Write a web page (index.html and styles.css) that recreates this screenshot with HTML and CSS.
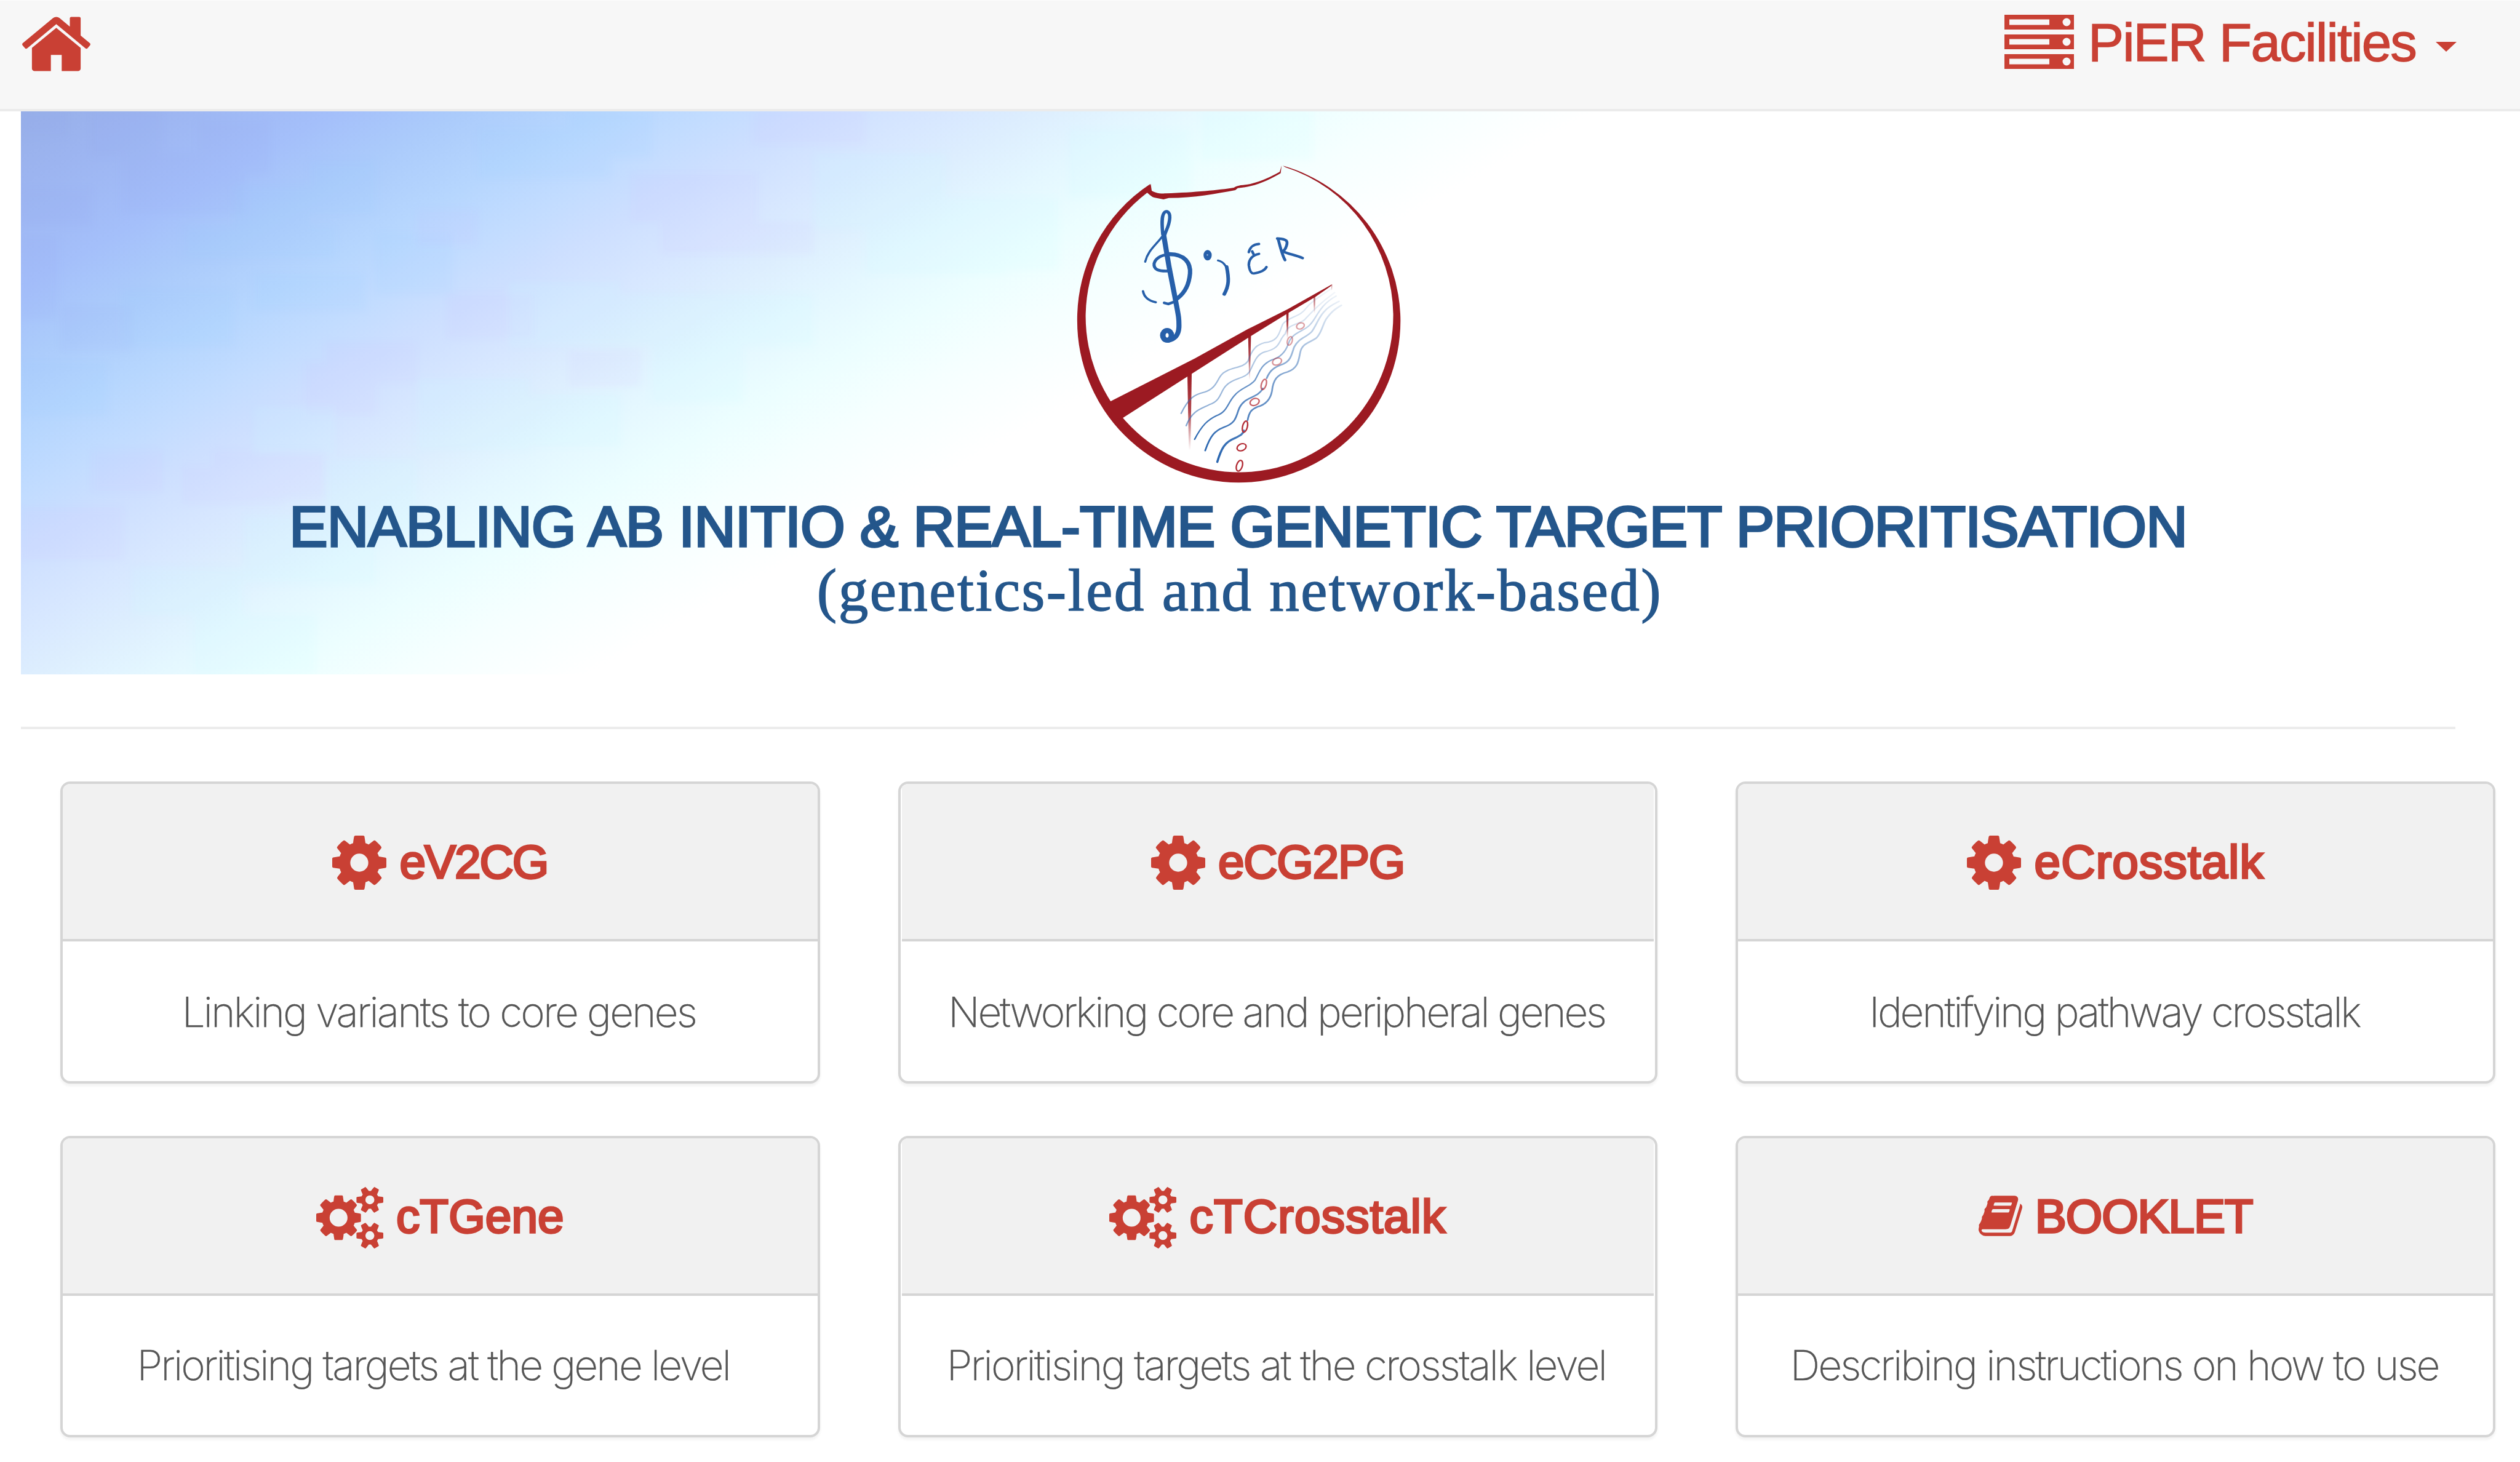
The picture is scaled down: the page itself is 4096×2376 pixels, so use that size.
FILE: index.html
```html
<!DOCTYPE html>
<html lang="en">
<head>
<meta charset="utf-8">
<title>PiER</title>
<link rel="stylesheet" href="styles.css">
</head>
<body>
<svg class="sprite" aria-hidden="true">
  <symbol id="cog" viewBox="128 128 1536 1536"><path d="M1152 896q0-106-75-181t-181-75-181 75-75 181 75 181 181 75 181-75 75-181zm512-109v222q0 12-8 23t-20 13l-185 28q-19 54-39 91 35 50 107 138 10 12 10 25t-9 23q-27 37-99 108t-94 71q-12 0-26-9l-138-108q-44 23-91 38-16 136-29 186-7 28-36 28h-222q-14 0-24.5-8.5t-11.5-21.5l-28-184q-49-16-90-37l-141 107q-10 9-25 9-14 0-25-11-126-114-165-168-7-10-7-23 0-12 8-23 15-21 51-66.500t54-70.500q-27-50-41-99l-183-27q-13-2-21-12.500t-8-23.500v-222q0-12 8-23t19-13l186-28q14-46 39-92-40-57-107-138-10-12-10-24 0-10 9-23 26-36 98.500-107.500t94.500-71.500q13 0 26 10l138 107q44-23 91-38 16-136 29-186 7-28 36-28h222q14 0 24.500 8.500t11.500 21.500l28 184q49 16 90 37l142-107q9-9 24-9 13 0 25 10 129 119 165 170 7 8 7 22 0 12-8 23-15 21-51 66.500t-54 70.500q26 50 41 98l183 28q13 2 21 12.500t8 23.500z"/></symbol>
  <symbol id="cogs" viewBox="-64 16 1920 1760"><path d="M832 896q0-106-75-181t-181-75-181 75-75 181 75 181 181 75 181-75 75-181zm768 512q0-52-38-90t-90-38-90 38-38 90q0 53 37.500 90.500t90.500 37.500 90.500-37.500 37.500-90.500zm0-1024q0-52-38-90t-90-38-90 38-38 90q0 53 37.500 90.500t90.500 37.500 90.500-37.500 37.500-90.500zm-384 421v185q0 10-7 19.500t-16 10.500l-155 24q-11 35-32 76 34 48 90 115 7 11 7 20 0 12-7 19-23 30-82.500 89.500t-78.500 59.500q-11 0-21-7l-115-90q-37 19-77 31-11 108-23 155-7 24-30 24h-186q-11 0-20-7.500t-10-17.500l-23-153q-34-10-75-31l-118 89q-7 7-20 7-11 0-21-8-144-133-144-160 0-9 7-19 10-14 41-53t47-61q-23-44-35-82l-152-24q-10-1-17-9.500t-7-19.500v-185q0-10 7-19.500t16-10.500l155-24q11-35 32-76-34-48-90-115-7-11-7-20 0-12 7-20 22-30 82-89t79-59q11 0 21 7l115 90q34-18 77-32 11-108 23-154 7-24 30-24h186q11 0 20 7.500t10 17.500l23 153q34 10 75 31l118-89q8-7 20-7 11 0 21 8 144 133 144 160 0 8-7 19-12 16-42 54t-45 60q23 48 34 82l152 23q10 2 17 10.500t7 19.500zm640 533v140q0 16-149 31-12 27-30 52 51 113 51 138 0 4-4 7-122 71-124 71-8 0-46-47t-52-68q-20 2-30 2t-30-2q-14 21-52 68t-46 47q-2 0-124-71-4-3-4-7 0-25 51-138-18-25-30-52-149-15-149-31v-140q0-16 149-31 13-29 30-52-51-113-51-138 0-4 4-7 4-2 35-20t59-34 30-16q8 0 46 46.500t52 67.500q20-2 30-2t30 2q51-71 92-112l6-2q4 0 124 70 4 3 4 7 0 25-51 138 17 23 30 52 149 15 149 31zm0-1024v140q0 16-149 31-12 27-30 52 51 113 51 138 0 4-4 7-122 71-124 71-8 0-46-47t-52-68q-20 2-30 2t-30-2q-14 21-52 68t-46 47q-2 0-124-71-4-3-4-7 0-25 51-138-18-25-30-52-149-15-149-31v-140q0-16 149-31 13-29 30-52-51-113-51-138 0-4 4-7 4-2 35-20t59-34 30-16q8 0 46 46.500t52 67.500q20-2 30-2t30 2q51-71 92-112l6-2q4 0 124 70 4 3 4 7 0 25-51 138 17 23 30 52 149 15 149 31z"/></symbol>
  <symbol id="book" viewBox="64 128 1664 1536"><path d="M1703 478q40 57 18 129l-275 906q-19 64-76.500 107.500t-122.500 43.500h-923q-77 0-148.500-53.500t-99.500-131.500q-24-67-2-127 0-4 3-27t4-37q1-8-3-21.500t-3-19.500q2-11 8-21t16.500-23.500 16.500-23.500q23-38 45-91.500t30-91.500q3-10 .5-30t-.5-28q3-11 17-28t17-23q21-36 42-92t25-90q1-9-2.500-32t.5-28q4-13 22-30.500t22-22.500q19-26 42.500-84.500t27.500-96.500q1-8-3-25.500t-2-26.500q2-8 9-18t18-23 17-21q8-12 16.500-30.500t15-35 16-36 19.500-32 26.500-23.500 36-11.500 47.500 5.500l-1 3q38-9 51-9h761q74 0 114 56t18 130l-274 906q-36 119-71.500 153.500t-128.500 34.500h-869q-27 0-38 15-11 16-1 43 24 70 144 70h923q29 0 56-15.500t35-41.500l300-987q7-22 5-57 38 15 59 43zm-1064 2q-4 13 2 22.500t20 9.500h608q13 0 25.500-9.500t16.500-22.500l21-64q4-13-2-22.500t-20-9.500h-608q-13 0-25.500 9.500t-16.500 22.500zm-83 256q-4 13 2 22.500t20 9.500h608q13 0 25.500-9.500t16.500-22.500l21-64q4-13-2-22.500t-20-9.500h-608q-13 0-25.500 9.500t-16.500 22.500z"/></symbol>
</svg>

<nav class="navbar">
  <a class="home" aria-label="Home">
    <svg class="home-icon" viewBox="89 253 1614 1283"><path d="M1472 992v480q0 26-19 45t-45 19h-384v-384h-256v384h-384q-26 0-45-19t-19-45v-480q0-1 .5-3t.5-3l575-474 575 474q1 2 1 6zm223-69l-62 74q-8 9-21 11h-3q-13 0-21-7l-692-577-692 577q-12 8-24 7-13-2-21-11l-62-74q-8-10-7-23.500t11-21.500l719-599q32-26 76-26t76 26l244 204v-195q0-14 9-23t23-9h192q14 0 23 9t9 23v408l219 182q10 8 11 21.500t-7 23.500z"/></svg>
  </a>
  <a class="facilities">
    <svg class="server-icon" viewBox="0 0 113 88"><path fill-rule="evenodd" d="M0 0h113v24H0zM8 7.500v9h65v-9zM94.500 12a6.500 6.500 0 1 0 13 0a6.500 6.500 0 1 0-13 0zM0 32h113v24H0zM8 39.500v9h65v-9zM94.500 44a6.500 6.500 0 1 0 13 0a6.500 6.500 0 1 0-13 0zM0 64h113v24H0zM8 71.500v9h65v-9zM94.500 76a6.500 6.500 0 1 0 13 0a6.500 6.500 0 1 0-13 0z"/></svg>
    <span class="facilities-label">PiER Facilities</span>
    <span class="caret"></span>
  </a>
</nav>

<main>
  <header class="banner">
    <svg class="mosaic" viewBox="21 16 2391.6 1400" preserveAspectRatio="none" aria-hidden="true">
      <g fill="#8f9cf0" opacity=".07">
        <path d="M21 16h45v60h-45zM90 16h70v110h-70zM120 120h122v150h-122zM21 330h36v200h-36zM21 210h70v90h-70zM195 40h70v130h-70zM60 500h70v110h-70z"/>
      </g>
      <g fill="#8ccdfb" opacity=".08">
        <path d="M305 140h65v130h-65zM180 300h150v80h-150zM370 320h75v150h-75zM120 460h110v140h-110zM470 60h130v120h-130zM230 200h75v110h-75zM21 640h85v130h-85zM250 420h110v90h-110zM560 20h80v110h-80z"/>
      </g>
      <g fill="#c9b8ff" opacity=".08">
        <path d="M620 170h125v120h-125zM740 16h110v80h-110zM650 290h150v80h-150zM410 260h60v90h-60zM320 590h90v100h-90zM300 640h70v130h-70zM210 860h110v120h-110zM180 900h100v90h-100zM440 470h85v110h-85zM21 1000h100v130h-100zM560 610h70v90h-70zM90 860h70v100h-70z"/>
      </g>
      <g fill="#c8fbff" opacity=".12">
        <path d="M500 440h110v160h-110zM800 120h130v190h-130zM850 280h140v140h-140zM610 470h190v130h-190zM410 680h110v180h-110zM240 1020h130v170h-130zM130 1150h110v120h-110zM1050 60h120v170h-120zM930 230h110v180h-110zM320 880h90v180h-90zM190 1270h120v146h-120zM1180 16h110v120h-110zM640 600h90v140h-90zM520 720h90v130h-90zM250 750h80v120h-80z"/>
      </g>
    </svg>
    <svg class="logo" viewBox="0 0 1568 1568" preserveAspectRatio="none" aria-label="PiER">
      <defs>
        <linearGradient id="water" gradientUnits="userSpaceOnUse" x1="680" y1="1400" x2="1200" y2="700"><stop offset="0" stop-color="#2a66b0"/><stop offset=".5" stop-color="#2a66b0" stop-opacity=".62"/><stop offset="1" stop-color="#2a66b0" stop-opacity=".1"/></linearGradient>
        <linearGradient id="water-far" gradientUnits="userSpaceOnUse" x1="560" y1="1300" x2="1180" y2="640"><stop offset="0" stop-color="#2a66b0" stop-opacity=".6"/><stop offset=".5" stop-color="#2a66b0" stop-opacity=".35"/><stop offset="1" stop-color="#2a66b0" stop-opacity=".05"/></linearGradient>
        <linearGradient id="pier" x1="0" y1="0" x2="0" y2="1"><stop offset="0" stop-color="#9c1a22"/><stop offset=".5" stop-color="#9c1a22" stop-opacity=".8"/><stop offset="1" stop-color="#9c1a22" stop-opacity="0"/></linearGradient>
      </defs>
      <g fill="#9c1a22">
        <path d="M415 168A670 737 0 0 0 112 790A670 737 0 0 0 782 1527A671 737 0 0 0 1453 790A671 737 0 0 0 965 85L975 92A640 711 0 0 1 1423 765A638 715 0 0 1 787 1480A640 711 0 0 1 147 770A640 711 0 0 1 402 208Z"/>
        <path d="M398 195L402 208C412 215 420 228 434 230L470 238L492 232C600 231 690 212 768 196L778 187C860 178 905 150 956 119L960 84L952 113C915 135 880 155 830 168C800 174 778 172 762 185C700 196 600 206 480 211C450 213 430 206 421 198L417 168Z"/>
        <path d="M240 1163L600 962L820 828L985 738L1168 625L1165 632L1100 682L985 757L830 862L590 1030L298 1235L262 1240Z"/>
      </g>
      <g fill="url(#pier)">
        <path d="M569 1030h18l-5 350h-7z"/><path d="M821 855h12l-4 204h-4z"/><path d="M979 748h10l-3 124h-4z"/><path d="M1092 678h8l-2 78h-4z" opacity=".6"/><path d="M1166 625h4l-1 28h-2z" opacity=".5"/>
      </g>
      <g fill="none" stroke="url(#water)" stroke-linecap="round">
        <path stroke-width="9" d="M693 1433C710 1370 725 1342 765 1325C790 1312 800 1306 804 1290"/>
        <path stroke-width="7" d="M819 1243C825 1205 835 1194 860 1182C900 1170 915 1140 920 1110C925 1060 940 1035 985 1023C1030 1005 1030 970 1037 935C1045 890 1080 890 1105 868C1130 840 1130 800 1150 775C1170 745 1185 735 1208 720"/>
        <path stroke-width="7" d="M643 1381C665 1310 685 1290 720 1275C765 1258 770 1235 780 1200C795 1150 830 1145 860 1125C875 1112 880 1104 882 1098M898 1052C915 1005 940 1000 970 985C1000 970 1003 935 1012 910C1030 870 1060 868 1085 840C1105 810 1115 770 1140 745C1155 725 1175 715 1198 702"/>
        <path stroke-width="6" d="M599 1330C630 1265 655 1240 690 1222C735 1205 735 1165 765 1130C790 1095 830 1090 850 1060C870 1020 875 990 920 968C965 955 980 920 988 895C1005 840 1050 842 1078 808C1105 780 1115 720 1186 678"/>
      </g>
      <g fill="none" stroke="url(#water-far)" stroke-width="6" stroke-linecap="round">
        <path d="M564 1268C590 1195 630 1190 660 1172C710 1155 705 1110 730 1085C760 1050 805 1055 825 1025C845 990 850 945 890 932C960 915 945 880 975 850C985 800 1040 810 1060 780C1090 745 1120 710 1180 662"/>
        <path d="M543 1212C575 1140 600 1125 640 1115C700 1095 690 1040 730 1020C760 1000 800 1005 820 975C840 910 860 900 890 890C950 885 950 840 965 805C985 775 1040 770 1060 735C1085 700 1120 680 1165 645"/>
      </g>
      <g fill="none" stroke="#b22c35" stroke-width="6">
        <ellipse cx="785" cy="1450" rx="12" ry="25" transform="rotate(15 785 1450)"/>
        <ellipse cx="794" cy="1366" rx="20" ry="15" transform="rotate(-30 794 1366)"/>
        <ellipse cx="808" cy="1272" rx="10" ry="26" transform="rotate(12 808 1272)"/>
        <ellipse cx="848" cy="1160" rx="20" ry="15" transform="rotate(-30 848 1160)" opacity=".75"/>
        <ellipse cx="886" cy="1080" rx="10" ry="24" transform="rotate(15 886 1080)" opacity=".7"/>
        <ellipse cx="941" cy="976" rx="20" ry="15" transform="rotate(-30 941 976)" opacity=".5"/>
        <ellipse cx="994" cy="882" rx="10" ry="20" transform="rotate(15 994 882)" opacity=".45"/>
        <ellipse cx="1038" cy="814" rx="17" ry="13" transform="rotate(-30 1038 814)" opacity=".45"/>
      </g>
      <g fill="none" stroke="#265fa9" stroke-linecap="round" stroke-linejoin="round">
        <path stroke-width="9" d="M394 522C405 470 440 445 466 405"/>
        <path stroke-width="14" d="M467 398C463 350 462 318 471 302C480 286 497 292 496 322C494 360 480 378 475 400"/>
        <path stroke-width="21" d="M472 408C485 500 500 590 517 680C530 760 535 770 534 820C532 860 515 874 490 880"/>
        <path stroke-width="13" d="M490 564C450 566 428 558 431 530C438 502 465 492 490 488"/>
        <path stroke-width="18" d="M495 487C560 487 583 530 580 575C575 640 550 670 528 688"/>
        <path stroke-width="10" d="M385 656C390 685 410 700 438 706"/>
        <path stroke-width="12" d="M473 709L490 714L515 704"/>
        <ellipse stroke-width="23" cx="485" cy="857" rx="18" ry="22"/>
        <path stroke-width="9" d="M696 516C722 522 735 548 738 575"/>
        <path stroke-width="15" d="M732 545C742 600 742 630 722 669"/>
        <path stroke-width="11" d="M866 441C842 442 828 458 824 478M866 486C836 492 823 515 824 538C827 565 835 576 845 575C868 571 890 562 897 546M838 475L846 493"/>
        <path stroke-width="12" d="M946 420C955 460 964 495 974 514M942 416C985 418 986 430 980 450C977 463 970 470 966 475C990 488 1015 490 1047 505"/>
      </g>
      <ellipse cx="653" cy="492" rx="17" ry="24" fill="#265fa9"/>
      <ellipse cx="652" cy="491" rx="3" ry="4" fill="#8fb0d8"/>
    </svg>
    <h1 class="headline">ENABLING AB INITIO &amp; REAL-TIME GENETIC TARGET PRIORITISATION</h1>
    <p class="subline">(genetics-led and network-based)</p>
  </header>

  <hr class="divider">

  <section class="cards">
    <article class="card">
      <h2 class="card-head"><svg class="icon-cog"><use href="#cog"/></svg><span class="t-ev2cg">eV2CG</span></h2>
      <p class="card-body">Linking variants to core genes</p>
    </article>
    <article class="card card-mid">
      <h2 class="card-head"><svg class="icon-cog"><use href="#cog"/></svg><span class="t-ecg2pg">eCG2PG</span></h2>
      <p class="card-body tight">Networking core and peripheral genes</p>
    </article>
    <article class="card">
      <h2 class="card-head"><svg class="icon-cog"><use href="#cog"/></svg><span class="t-ecrosstalk">eCrosstalk</span></h2>
      <p class="card-body tight">Identifying pathway crosstalk</p>
    </article>
    <article class="card">
      <h2 class="card-head"><svg class="icon-cogs"><use href="#cogs"/></svg><span class="t-ctgene">cTGene</span></h2>
      <p class="card-body low gene-level">Prioritising targets at the gene level</p>
    </article>
    <article class="card card-mid">
      <h2 class="card-head"><svg class="icon-cogs"><use href="#cogs"/></svg><span class="t-ctcrosstalk">cTCrosstalk</span></h2>
      <p class="card-body low crosstalk-level">Prioritising targets at the crosstalk level</p>
    </article>
    <article class="card">
      <h2 class="card-head"><svg class="icon-book"><use href="#book"/></svg><span class="t-booklet">BOOKLET</span></h2>
      <p class="card-body low">Describing instructions on how to use</p>
    </article>
  </section>
</main>
</body>
</html>
```
FILE: styles.css
```css
* { box-sizing: border-box; }
body { margin: 0; width: 4096px; height: 2376px; overflow: hidden; background: #fff; font-family: "Liberation Sans", Arial, sans-serif; }
.sprite { display: none; }
svg { display: block; flex: none; }

.navbar { display: flex; justify-content: space-between; align-items: flex-start; height: 181px; padding: 0 103px 0 36px; background: #f7f7f7; border-top: 1px solid #fdfdfd; border-bottom: 4px solid #ebebeb; color: #c94034; fill: #c94034; }
.home-icon { width: 111px; height: 89px; margin-top: 26px; }
.facilities { display: flex; align-items: flex-start; }
.server-icon { width: 113px; height: 88px; margin-top: 23px; }
.facilities-label { margin: 18px 0 0 23px; font-size: 87px; line-height: 100px; letter-spacing: -1.850px; white-space: nowrap; -webkit-text-stroke: 1.400px #c94034; }
.caret { margin: 67px 0 0 32px; border: 17.500px solid transparent; border-top: 16px solid #c94034; border-bottom: 0; }

.banner { position: relative; display: flex; flex-direction: column; align-items: center; width: 3957px; height: 915px; margin-left: 34px; padding-top: 58px; background: linear-gradient(150.8deg, #97afe8 0, #9cb4f0 100px, #a4bffa 250px, #abcbfb 350px, #b6d6fe 460px, #c2dcff 550px, #cddfff 630px, #d6e6ff 720px, #ddeefe 810px, #e4f7ff 900px, #ecfeff 1000px, #f5ffff 1100px, #fff 1250px); }
.mosaic { position: absolute; inset: 0; width: 100%; height: 100%; filter: blur(6px); clip-path: inset(0); }
.logo { position: relative; width: 614.400px; height: 560px; margin-left: 3px; }
.headline { position: relative; margin: 7px 0 0; font-size: 93.500px; line-height: 100px; font-weight: 400; letter-spacing: -.950px; color: #24568b; -webkit-text-stroke: 3.600px #24568b; white-space: nowrap; }
.subline { position: relative; margin: 2px 0 0 5px; font-family: "Liberation Serif", "Times New Roman", serif; font-size: 97px; line-height: 104px; letter-spacing: 2.550px; color: #24568b; -webkit-text-stroke: 1.500px #24568b; white-space: nowrap; }
.divider { width: 3957px; height: 4px; margin: 85px 0 85px 34px; border: 0; background: #ececec; }

.cards { display: grid; grid-template-columns: repeat(3, 1fr); grid-template-rows: 491px 490px; gap: 85px 127px; width: 3958px; margin-left: 98px; }
.card { display: flex; flex-direction: column; border: 4px solid #d5d5d5; border-radius: 16px; background: #fff; box-shadow: 0 4px 4px rgba(0, 0, 0, .05); overflow: hidden; }
.card-head { display: flex; justify-content: center; align-items: center; gap: 21px; height: 256px; margin: 0; border-bottom: 4px solid #d5d5d5; background: #f1f1f1; color: #c94034; fill: #c94034; font-size: 76.500px; line-height: 77px; font-weight: 400; -webkit-text-stroke: 3.400px #c94034; white-space: nowrap; }
.card-head svg { stroke: none; -webkit-text-stroke: 0; }
.card-mid .card-head { margin: 0 2px; }
.icon-cog { width: 88px; height: 88px; margin-top: 4px; }
.icon-cogs { width: 109px; height: 100px; margin-top: 6px; }
.icon-book { width: 71px; height: 66px; }
.t-ev2cg { letter-spacing: -2px; }
.t-ecg2pg { letter-spacing: -1.200px; }
.t-ecrosstalk { letter-spacing: 1.200px; }
.t-ctgene { letter-spacing: .1px; }
.t-ctcrosstalk { letter-spacing: 1.200px; }
.t-booklet { letter-spacing: -1.100px; }
.card-body { flex: 1; margin: 0; padding-top: 77px; padding-right: 4px; text-align: center; color: #555; font-family: Inter, "Liberation Sans", sans-serif; font-weight: 200; font-size: 67.500px; line-height: 75px; letter-spacing: -2.900px; white-space: nowrap; -webkit-text-stroke: .4px #555; }
.card-body.tight { letter-spacing: -3.300px; }
.card-body.low { padding-top: 75px; }
.card-body.gene-level { padding-right: 22px; }
.card-body.crosstalk-level { padding-right: 5px; letter-spacing: -2.700px; }
```
